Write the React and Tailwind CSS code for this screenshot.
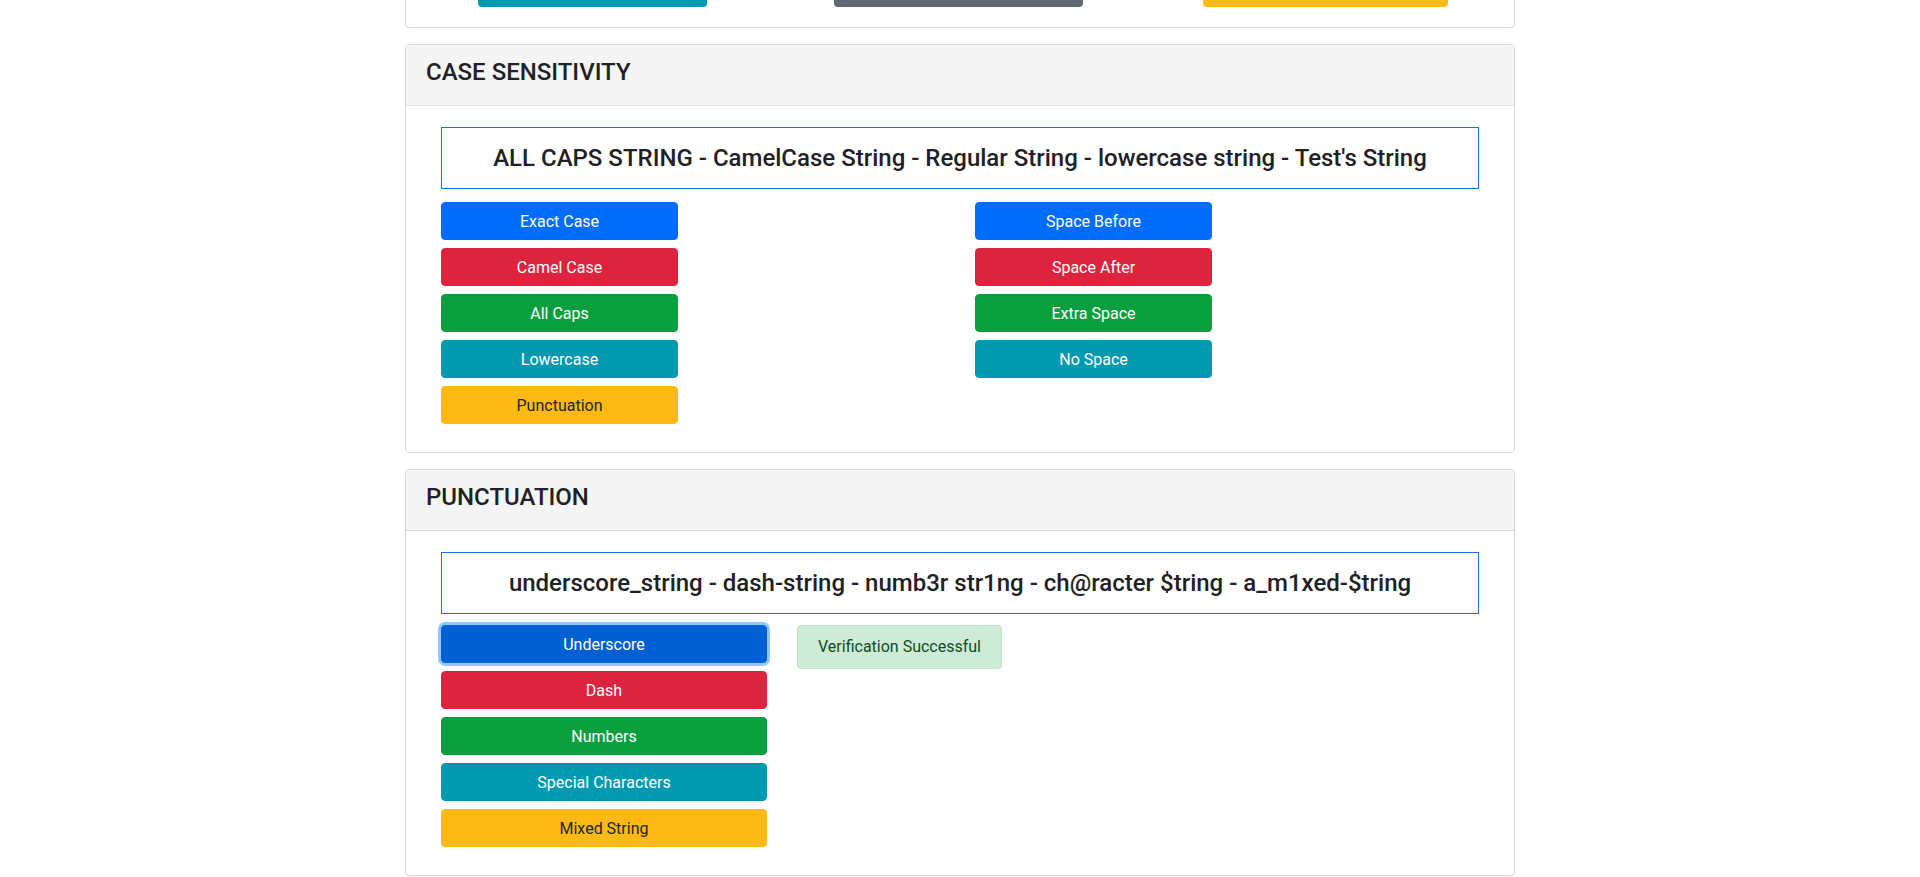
import React from 'react'

const font = "font-['Roboto','Noto_Sans',sans-serif]"

const btnColors = {
  primary: 'bg-[#026dfd] border-[#026dfd] text-white',
  primaryActive: 'bg-[#005fd3] border-[#005fd3] text-white shadow-[0_0_0_3px_rgba(38,143,255,0.5)]',
  danger: 'bg-[#dd243f] border-[#dd243f] text-white',
  success: 'bg-[#0a9f3e] border-[#0a9f3e] text-white',
  info: 'bg-[#009ab0] border-[#009ab0] text-white',
  warning: 'bg-[#ffb914] border-[#ffb914] text-[#212529]',
  secondary: 'bg-[#5f6873] border-[#5f6873] text-white',
}

const Btn = ({ color, children }) => (
  <button
    className={`block w-full h-[38px] mb-2 pt-px rounded-[4px] border text-base leading-6 text-center ${btnColors[color]}`}
  >
    {children}
  </button>
)

const Card = ({ title, children }) => (
  <div className="border border-[#dcdcdc] rounded-[4px] bg-white mb-4">
    <div className="bg-[#f5f5f5] border-b border-[#dcdcdc] px-5 pt-[13px] pb-[19px] rounded-t-[4px]">
      <h4 className="text-2xl leading-7 font-medium text-[#1e2125]">{title}</h4>
    </div>
    <div className="px-5 pt-[21px] pb-5">{children}</div>
  </div>
)

const Phrase = ({ children, gap = 'mb-[13px]' }) => (
  <div className={`h-[62px] ${gap} border border-[#1a6fe8] flex items-center justify-center`}>
    <h4 className="text-2xl leading-7 font-medium text-[#1e2125]">{children}</h4>
  </div>
)

const App = () => {
  return (
    <div className={`${font} w-full h-[877px] overflow-hidden bg-white text-[#212529]`}>
      <div className="w-[1110px] mx-auto">
        <div className="-mt-[52px] border border-[#dcdcdc] rounded-[4px] bg-white mb-4">
          <div className="p-5 flex">
            <div className="ml-[52px] w-[229px] h-[38px] rounded-[4px] bg-[#009ab0]"></div>
            <div className="ml-[127px] w-[249px] h-[38px] rounded-[4px] bg-[#5f6873]"></div>
            <div className="ml-[120px] w-[245px] h-[38px] rounded-[4px] bg-[#ffb914]"></div>
          </div>
        </div>

        <Card title="CASE SENSITIVITY">
          <div className="px-[15px]">
            <Phrase>ALL CAPS STRING - CamelCase String - Regular String - lowercase string - Test's String</Phrase>
            <div className="grid grid-cols-4 gap-x-[30px]">
              <div>
                <Btn color="primary">Exact Case</Btn>
                <Btn color="danger">Camel Case</Btn>
                <Btn color="success">All Caps</Btn>
                <Btn color="info">Lowercase</Btn>
                <Btn color="warning">Punctuation</Btn>
              </div>
              <div></div>
              <div>
                <Btn color="primary">Space Before</Btn>
                <Btn color="danger">Space After</Btn>
                <Btn color="success">Extra Space</Btn>
                <Btn color="info">No Space</Btn>
              </div>
            </div>
          </div>
        </Card>

        <Card title="PUNCTUATION">
          <div className="px-[15px]">
            <Phrase gap="mb-[11px]">underscore_string - dash-string - numb3r str1ng - ch@racter $tring - a_m1xed-$tring</Phrase>
            <div className="grid grid-cols-3 gap-x-[30px]">
              <div>
                <Btn color="primaryActive">Underscore</Btn>
                <Btn color="danger">Dash</Btn>
                <Btn color="success">Numbers</Btn>
                <Btn color="info">Special Characters</Btn>
                <Btn color="warning">Mixed String</Btn>
              </div>
              <div className="flex items-start">
                <div className="py-[9px] px-5 rounded-[4px] border border-[#bfe3c9] bg-[#cdebd6] text-[#0f4d22] text-base leading-6">
                  Verification Successful
                </div>
              </div>
            </div>
          </div>
        </Card>
      </div>
    </div>
  )
}

export default App
